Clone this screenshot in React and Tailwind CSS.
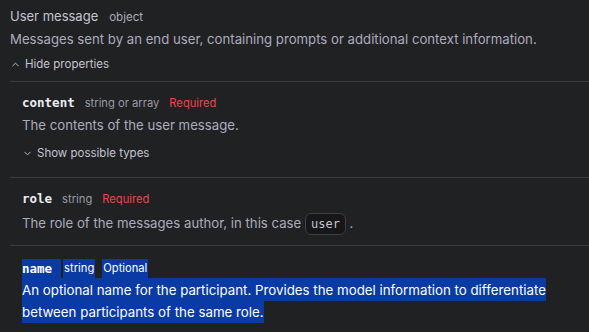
import { ChevronUp, ChevronDown } from 'lucide-react';

const font = { fontFamily: 'Inter, "Noto Sans", sans-serif' };
const mono = "font-['DejaVu_Sans_Mono',monospace]";

function FieldHead({ name, type, required }) {
  return (
    <div className="flex items-baseline gap-2.5 leading-5">
      <span className={`${mono} font-bold text-[12.5px] text-[#ececf1]`}>{name}</span>
      <span className="text-[11.2px] text-[#9a9aa6]">{type}</span>
      {required && <span className="text-[11.2px] text-[#e5484d]">Required</span>}
    </div>
  );
}

export default function App() {
  return (
    <div className="w-[589px] h-[332px] overflow-hidden bg-[#202123] text-[#acacbe]" style={font}>
      <div className="pl-[10px] pt-[6px]">
        <div className="flex items-baseline gap-[11px] leading-5">
          <span className="text-[13px] text-[#c5c5d2]">User message</span>
          <span className="text-[11.5px] text-[#acacbe]">object</span>
        </div>
        <p className="text-[13.2px] leading-[22px] mt-px">
          Messages sent by an end user, containing prompts or additional context information.
        </p>
        <button className="flex items-center gap-1 text-[11.5px] leading-4 text-[#c5c5d2] mt-[6px] mb-[9px]">
          <ChevronUp size={11} strokeWidth={2} />
          Hide properties
        </button>

        <div className="border-t border-[#3a3b40] pl-3 pt-[11px] pb-4">
          <FieldHead name="content" type="string or array" required />
          <p className="text-[13.2px] leading-[22px] mt-px">The contents of the user message.</p>
          <button className="flex items-center gap-1 text-[11.5px] leading-4 text-[#c5c5d2] mt-[9px]">
            <ChevronDown size={11} strokeWidth={2} />
            Show possible types
          </button>
        </div>

        <div className="border-t border-[#3a3b40] pl-3 pt-[11px] pb-[10px]">
          <FieldHead name="role" type="string" required />
          <p className="text-[13.2px] leading-[22px] mt-[3px]">
            The role of the messages author, in this case{' '}
            <code className={`${mono} text-[12px] text-[#c5c5d2] bg-[#17171a] border border-[#3f4046] rounded-[6px] px-[5px] py-[3px]`}>user</code>
            {' '}.
          </p>
        </div>

        <div className="border-t border-[#3a3b40] pl-3 pt-[13px]">
          <div className="flex items-stretch leading-[19px]">
            <span className={`bg-[#0a3aa3] pr-[9px] ${mono} font-bold text-[12.5px] text-white`}>name</span>
            <span className="bg-[#0a3aa3] px-px ml-[2px] text-[11.2px] text-white">string</span>
            <span className="bg-[#0a3aa3] px-px ml-[7px] text-[11.2px] text-white">Optional</span>
          </div>
          <p className="text-[13.3px] leading-[22.5px] text-white pr-8">
            <span className="bg-[#0a3aa3] py-[3.5px] box-decoration-clone">
              An optional name for the participant. Provides the model information to differentiate between participants of the same role.
            </span>
          </p>
        </div>
      </div>
    </div>
  );
}
